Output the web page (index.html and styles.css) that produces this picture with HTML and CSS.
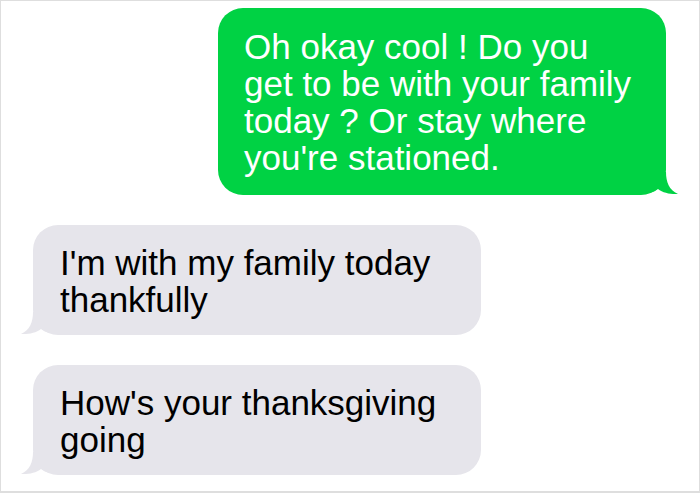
FILE: index.html
```html
<!DOCTYPE html>
<html>
<head>
<meta charset="utf-8">
<link rel="stylesheet" href="styles.css">
</head>
<body>
<div class="frame">
  <div class="bubble sent">
    <p class="text">Oh okay cool ! Do you<br>get to be with your family<br>today ? Or stay where<br>you're stationed.</p>
    <svg class="tail tail-sent" width="36" height="24" viewBox="0 0 36 24"><path d="M0 21 L0 0 L21 0 C21 10 24 18 33 22 C26 22.5 18 21 13 17 C9 20 5 21 0 21 Z"/></svg>
  </div>
  <div class="bubble recv">
    <p class="text">I'm with my family today<br>thankfully</p>
    <svg class="tail tail-recv" width="36" height="24" viewBox="0 0 36 24"><path d="M0 21 L0 0 L21 0 C21 10 24 18 33 22 C26 22.5 18 21 13 17 C9 20 5 21 0 21 Z"/></svg>
  </div>
  <div class="bubble recv">
    <p class="text">How's your thanksgiving<br>going</p>
    <svg class="tail tail-recv" width="36" height="24" viewBox="0 0 36 24"><path d="M0 21 L0 0 L21 0 C21 10 24 18 33 22 C26 22.5 18 21 13 17 C9 20 5 21 0 21 Z"/></svg>
  </div>
</div>
</body>
</html>
```
FILE: styles.css
```css
html, body {
  margin: 0;
  padding: 0;
  background: #ffffff;
}
.frame {
  width: 700px;
  height: 493px;
  box-sizing: border-box;
  border: 1px solid #dedede;
  border-bottom-width: 2px;
  padding: 7px 33px 0 32px;
  display: flex;
  flex-direction: column;
  gap: 30px;
  font-family: "Liberation Sans", Arial, sans-serif;
}
.bubble {
  position: relative;
  width: 448px;
  box-sizing: border-box;
  border-radius: 25px;
  padding: 19px 20px 17px 27px;
}
.text {
  margin: 0;
  font-size: 35px;
  line-height: 37px;
  white-space: nowrap;
}
.sent {
  align-self: flex-end;
  background: #00d244;
  color: #ffffff;
  padding: 20px 20px 19px 26px;
}
.recv {
  align-self: flex-start;
  background: #e6e5eb;
  color: #000000;
}
.tail {
  position: absolute;
  bottom: -1px;
}
.tail-sent {
  right: -15px;
  fill: #00d244;
}
.tail-recv {
  left: -15px;
  fill: #e6e5eb;
  transform: scaleX(-1);
}
```
